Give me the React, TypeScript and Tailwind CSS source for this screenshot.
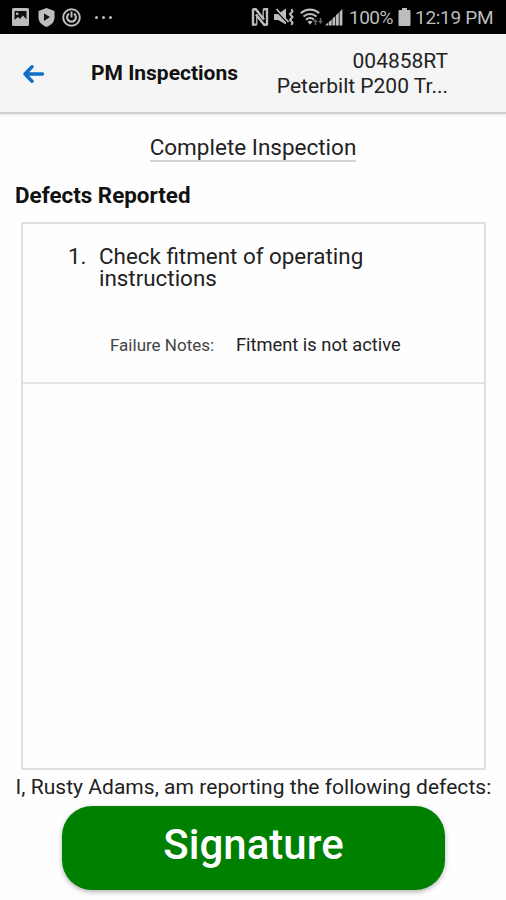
type Defect = {
  id: number;
  title: string;
  notes: string;
};

const defects: Defect[] = [
  {
    id: 1,
    title: "Check fitment of operating instructions",
    notes: "Fitment is not active",
  },
];

function PictureIcon() {
  return (
    <svg width="17" height="18" viewBox="0 0 17 18">
      <rect width="17" height="18" rx="1.5" fill="#bdbdbd" />
      <path d="M2.5 3h12v8.5l-3.5-4-3 3.5-2-2-3.5 3z" fill="#111" />
      <circle cx="5.2" cy="5.8" r="1.3" fill="#bdbdbd" />
    </svg>
  );
}

function ShieldIcon() {
  return (
    <svg width="17" height="19" viewBox="0 0 17 19">
      <path
        d="M8.5 0 16.5 3v6.5c0 4.3-3.2 7.7-8 9.5-4.8-1.8-8-5.2-8-9.5V3z"
        fill="#bdbdbd"
      />
      <path d="M6 5.5 12 9l-6 4z" fill="#111" />
    </svg>
  );
}

function PowerIcon() {
  return (
    <svg width="19" height="19" viewBox="0 0 19 19" fill="none" stroke="#bdbdbd">
      <circle cx="9.5" cy="9.5" r="8.3" strokeWidth="2" />
      <path d="M7 5.7a4.4 4.4 0 1 0 5 0" strokeWidth="2.2" />
      <path d="M9.5 3.5v6" strokeWidth="2" />
    </svg>
  );
}

function NfcIcon() {
  return (
    <svg width="18" height="18" viewBox="0 0 18 18" fill="none" stroke="#bdbdbd">
      <path d="M5.8 16.6H2V2q0-.8.8-.8h2L13 11.5" strokeWidth="2.4" />
      <path d="M12.2 1.2H16V16q0 .8-.8.8h-2L5 6.5" strokeWidth="2.4" />
      <path d="M5.8 6v10.6M12.2 1.2V11" strokeWidth="1.3" />
    </svg>
  );
}

function MuteVibrateIcon() {
  return (
    <svg width="20" height="18" viewBox="0 0 20 18" fill="none" stroke="#bdbdbd">
      <path d="M0 6h4l8-5.5v16L4 12H0z" fill="#bdbdbd" stroke="none" />
      <path d="M1 1.5 14 15.5" stroke="#000" strokeWidth="1.2" />
      <path d="M2.5 1 14.5 14" strokeWidth="1.8" />
      <path d="m17.5 1 1 2.5L16 6l2.5 3-2.5 3 2.500 2.500-1 2.500" strokeWidth="2" />
    </svg>
  );
}

function WifiIcon() {
  return (
    <svg width="23" height="18" viewBox="0 0 23 18" fill="none" stroke="#bdbdbd">
      <path
        d="M.8 5.2a13.5 13.5 0 0 1 18.4 0M3.5 8.5a9.8 9.8 0 0 1 13 0M6 11.7a6 6 0 0 1 8 0"
        strokeWidth="2.1"
      />
      <path d="m7.5 13.8 2.5 3 2.5-3q-2.5-2-5 0z" fill="#bdbdbd" stroke="none" />
      <path
        d="m15.5 11-2.3 3h1.5v3h1.600v-3h1.500zM20.500 16l-2.300-3h1.500v-3h1.600v3h1.500z"
        fill="#666"
        stroke="none"
      />
    </svg>
  );
}

function SignalIcon() {
  return (
    <svg width="18" height="18" viewBox="0 0 18 18" fill="#bdbdbd">
      <path d="M0 17.5 3.2 14.6v2.9zM3.8 14l2.9-2.6v6.1H3.8zM7.4 10.8l2.9-2.9v9.6H7.4zM11 7.2l2.8-2.8v13.1H11zM14.6 3.7l2.8-2.7v16.5h-2.8z" />
    </svg>
  );
}

function BatteryIcon() {
  return (
    <svg width="13" height="18" viewBox="0 0 13 18" fill="#bdbdbd">
      <path d="M4 0h5v2h2.5q1 0 1 1v14q0 1-1 1h-10q-1 0-1-1V3q0-1 1-1H4z" />
    </svg>
  );
}

function StatusBar() {
  return (
    <div className="flex h-[34px] items-center bg-black px-3 text-[#bdbdbd]">
      <PictureIcon />
      <div className="ml-[9px]">
        <ShieldIcon />
      </div>
      <div className="ml-[7px]">
        <PowerIcon />
      </div>
      <div className="ml-[14px] flex gap-1">
        <span className="h-[3px] w-[3px] rounded-full bg-[#bdbdbd]" />
        <span className="h-[3px] w-[3px] rounded-full bg-[#bdbdbd]" />
        <span className="h-[3px] w-[3px] rounded-full bg-[#bdbdbd]" />
      </div>
      <div className="ml-auto flex items-center">
        <NfcIcon />
        <div className="ml-[5px]">
          <MuteVibrateIcon />
        </div>
        <div className="ml-[6px]">
          <WifiIcon />
        </div>
        <div className="ml-[2px]">
          <SignalIcon />
        </div>
        <span className="mt-[2px] ml-[6px] w-[49px] text-[19px] tracking-[-0.5px]">100%</span>
        <BatteryIcon />
        <span className="mt-[2px] ml-1 w-[79px] text-[19px] whitespace-nowrap tracking-[-0.3px]">
          12:19 PM
        </span>
      </div>
    </div>
  );
}

function Header() {
  return (
    <header className="flex h-[80px] items-center border-b-2 border-[#cfcfcf] bg-[#f5f5f5] pr-[58px] pl-[23px] shadow-[0_1px_3px_rgba(0,0,0,0.12)]">
      <button type="button" aria-label="Back" className="mt-[2px]">
        <svg
          width="22"
          height="20"
          viewBox="0 0 22 20"
          fill="none"
          stroke="#0f6fc6"
          strokeWidth="3.4"
          strokeLinecap="round"
          strokeLinejoin="round"
        >
          <path d="M19.5 10H2.5M9 2.8 2 10 9 17.2" />
        </svg>
      </button>
      <h1 className="mt-[2px] ml-[46px] text-[21px] font-bold whitespace-nowrap text-[#111]">
        PM Inspections
      </h1>
      <div className="mt-[2px] ml-auto text-right text-[21px] leading-[25px] whitespace-nowrap text-[#222]">
        <div>004858RT</div>
        <div>Peterbilt P200 Tr...</div>
      </div>
    </header>
  );
}

function DefectRow({ defect }: { defect: Defect }) {
  return (
    <li className="h-[160px] border-b-2 border-[#e2e6ea] pt-[21px]">
      <div className="flex pl-[45px] text-[22.4px] leading-[22px] text-[#222]">
        <span className="w-[31px]">{defect.id}.</span>
        <span className="w-[300px]">{defect.title}</span>
      </div>
      <div className="mt-[44px] flex items-center pl-[87px] leading-[24px] whitespace-nowrap">
        <span className="w-[126px] text-[17px] text-[#444]">
          Failure Notes:
        </span>
        <span className="text-[18.3px] text-[#222]">{defect.notes}</span>
      </div>
    </li>
  );
}

export default function App() {
  return (
    <div className="flex h-[900px] w-[506px] flex-col overflow-hidden bg-[#fefefe] font-[Roboto,sans-serif]">
      <StatusBar />
      <Header />
      <main className="flex flex-1 flex-col">
        <h2 className="mt-5 h-[28px] self-center border-b-2 border-[#d4d4d4] text-[22.5px] leading-[26px] text-[#222]">
          Complete Inspection
        </h2>
        <h3 className="mt-[19px] pl-[15px] text-[22.4px] leading-[28px] font-bold text-[#111]">
          Defects Reported
        </h3>
        <ul className="mt-[13px] ml-[21px] h-[548px] w-[465px] border-2 border-[#dfdfdf]">
          {defects.map((defect) => (
            <DefectRow key={defect.id} defect={defect} />
          ))}
        </ul>
        <p className="mt-[4px] pl-[15.5px] text-[21px] leading-[26px] whitespace-nowrap tracking-[0.04px] text-[#222]">
          I, Rusty Adams, am reporting the following defects:
        </p>
        <button
          type="button"
          className="mt-[6px] ml-[62px] h-[84px] w-[383px] rounded-[30px] bg-[#008000] pb-[6px] text-[42px] leading-[50px] font-medium text-white shadow-[0_2px_5px_rgba(0,0,0,0.3)]"
        >
          Signature
        </button>
      </main>
    </div>
  );
}
